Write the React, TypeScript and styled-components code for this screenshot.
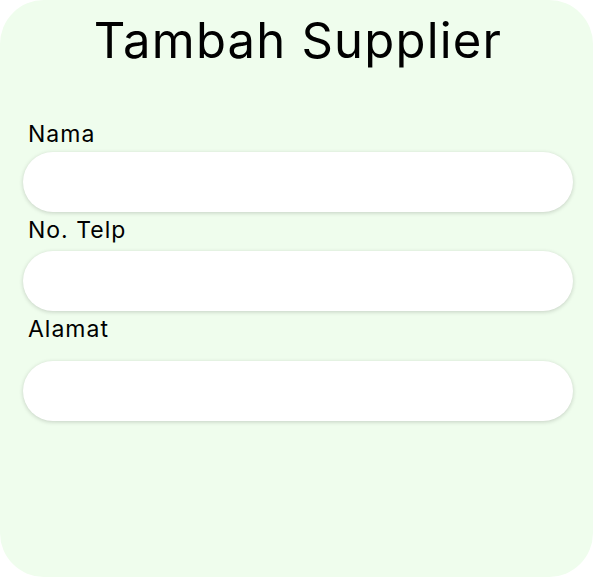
import React from 'react'
import styled, { createGlobalStyle } from 'styled-components'

const GlobalStyle = createGlobalStyle`
  body {
    margin: 0;
    background: #ffffff;
    font-family: Inter, "Noto Sans", sans-serif;
  }
`

const Card = styled.div`
  width: 593px;
  height: 577px;
  box-sizing: border-box;
  background-color: #effded;
  border-radius: 44px;
  padding: 9px 20px 0 23px;
`
const Title = styled.h1`
  margin: 0 0 47px;
  text-align: center;
  font-size: 49px;
  font-weight: 400;
  letter-spacing: 1.2px;
  line-height: 64px;
  color: #000;
`
const Field = styled.div`
  display: flex;
  flex-direction: column;
  & + & {
    margin-top: 4px;
  }
`
const Label = styled.label<{ $gap: number }>`
  font-size: 23px;
  line-height: 28px;
  letter-spacing: 1px;
  padding-left: 5px;
  margin-bottom: ${({ $gap }) => $gap}px;
  color: #000;
`
const Input = styled.input`
  width: 550px;
  height: 60px;
  box-sizing: border-box;
  border: none;
  outline: none;
  border-radius: 30px;
  background: #fff;
  box-shadow: 0 1px 4px rgba(0, 0, 0, 0.18);
  padding: 0 24px;
  font-size: 18px;
  font-family: inherit;
`

const fields = [
  { label: 'Nama', gap: 4 },
  { label: 'No. Telp', gap: 7 },
  { label: 'Alamat', gap: 18 }
]

const App: React.FC = () => (
  <>
    <GlobalStyle />
    <Card>
      <Title>Tambah Supplier</Title>
      {fields.map(f => (
        <Field key={f.label}>
          <Label $gap={f.gap}>{f.label}</Label>
          <Input type='text' />
        </Field>
      ))}
    </Card>
  </>
)

export default App
